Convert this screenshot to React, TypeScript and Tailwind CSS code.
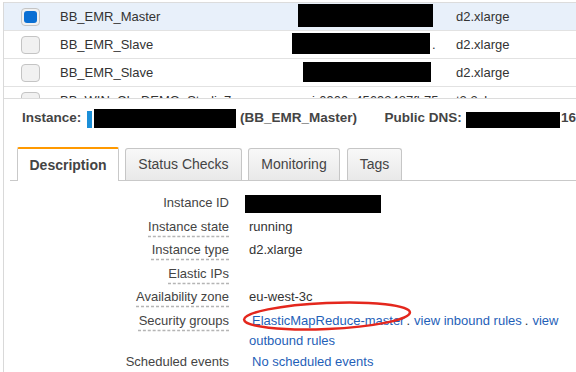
import React from "react";

const rows = [
  { name: "BB_EMR_Master", type: "d2.xlarge", sel: true, box: { l: 298, w: 135, t: 1, h: 23 }, dot: false },
  { name: "BB_EMR_Slave", type: "d2.xlarge", sel: false, box: { l: 292, w: 138, t: 2, h: 21 }, dot: true },
  { name: "BB_EMR_Slave", type: "d2.xlarge", sel: false, box: { l: 303, w: 128, t: 3, h: 20 }, dot: false },
];

function Checkbox({ checked }: { checked: boolean }) {
  return (
    <div className="w-[19px] h-[18px] rounded-[4px] border border-[#c4c4c4] bg-[#f1f1f1] flex items-center justify-center">
      {checked && <div className="w-[13px] h-[12px] rounded-[3px] bg-[#0a6fd3]" />}
    </div>
  );
}

export default function App() {
  return (
    <div className="w-[576px] h-[372px] overflow-hidden bg-white relative font-['Liberation_Sans',Arial,sans-serif] text-[#333]">
      <div className="ml-[3px] h-full border-l border-[#d9d9d9]">
        {/* table */}
        <div className="mt-[2px] h-[97px] border-t border-b border-[#dcdcdc] overflow-hidden text-[13px]">
          {rows.map((r, i) => (
            <div
              key={i}
              className={`relative flex items-center h-[28px] border-b border-[#e2e2e2] ${r.sel ? "bg-[#e8f0fa]" : "bg-white"}`}
            >
              <div className="w-[56px] pl-[17px]">
                <Checkbox checked={r.sel} />
              </div>
              <div className="w-[252px]">{r.name}</div>
              <div className="w-[144px]">
                <div className="relative h-[20px]">
                  {r.dot && <span className="absolute left-[120px] top-0 leading-[20px]">.</span>}
                </div>
              </div>
              <div>{r.type}</div>
              <div
                className="absolute bg-black"
                style={{ left: r.box.l - 4, top: r.box.t, width: r.box.w, height: r.box.h }}
              />
            </div>
          ))}
          <div className="relative flex items-center h-[28px] bg-white">
            <div className="w-[56px] pl-[17px]">
              <Checkbox checked={false} />
            </div>
            <div className="w-[252px]">BB_WIN_CL_DEMO_Studio7</div>
            <div className="w-[144px]">i-0900a45692487fb75</div>
            <div>t2.2xlarge</div>
          </div>
        </div>

        {/* instance line */}
        <div className="mt-[8px] h-[22px] flex items-center text-[13.5px] font-bold text-[#444]">
          <div className="w-[366px] ml-[18px] flex items-center">
            <span className="w-[65px]">Instance:</span>
            <span className="w-[5px] h-[17px] bg-[#1b8fd8] mt-[3px]" />
            <span className="ml-[2px] w-[142px] h-[19px] bg-black" />
            <span className="ml-[4px]">(BB_EMR_Master)</span>
          </div>
          <span className="w-[82px]">Public DNS:</span>
          <span className="w-[95px] h-[16px] bg-black mt-[4px]" />
          <span className="ml-[1px]">16</span>
        </div>

        {/* tabs */}
        <div className="mt-[18px] ml-[6px] h-[34px] flex items-end border-b border-[#c9c9c9] text-[14px]">
          <div className="ml-[7px] -mb-px w-[102px] h-[34px] bg-white border-t-2 border-t-[#ff9900] border-x border-x-[#c9c9c9] rounded-t-[2px] flex items-center justify-center font-bold text-[#444]">
            Description
          </div>
          <div className="ml-[6px] w-[117px] h-[32px] border border-b-0 border-[#c6c6c6] rounded-t-[3px] bg-gradient-to-b from-[#f8f8f8] to-[#e9e9e9] flex items-center justify-center text-[#444]">
            Status Checks
          </div>
          <div className="ml-[6px] w-[92px] h-[32px] border border-b-0 border-[#c6c6c6] rounded-t-[3px] bg-gradient-to-b from-[#f8f8f8] to-[#e9e9e9] flex items-center justify-center text-[#444]">
            Monitoring
          </div>
          <div className="ml-[7px] w-[55px] h-[32px] border border-b-0 border-[#c6c6c6] rounded-t-[3px] bg-gradient-to-b from-[#f8f8f8] to-[#e9e9e9] flex items-center justify-center text-[#444]">
            Tags
          </div>
        </div>

        {/* details */}
        <div className="mt-[12px] text-[13px] leading-[20px]">
          <div className="flex">
            <div className="w-[225px] text-right text-[#444]">Instance ID</div>
            <div className="ml-[20px] w-[320px] flex items-center">
              <div className="-ml-[4px] mt-[1px] w-[136px] h-[18px] bg-black" />
            </div>
          </div>
          <DRow label="Instance state" value="running" />
          <DRow label="Instance type" value="d2.xlarge" />
          <DRow label="Elastic IPs" value="" />
          <DRow label="Availability zone" value="eu-west-3c" />
          <div className="flex mt-[3.5px]">
            <div className="w-[225px] text-right text-[#444]">
              <span className="underline decoration-dashed decoration-[#b5b5b5] underline-offset-[5px]">Security groups</span>
            </div>
            <div className="ml-[20px] w-[322px] text-[#1f5fb8]">
              <span className="ml-[3px]">ElasticMapReduce-master</span>
              <span className="text-[#333] ml-[2px] mr-[4px]">.</span>
              <span>view inbound rules</span>
              <span className="text-[#333] ml-[3px] mr-[4px]">.</span>
              <span>view outbound rules</span>
            </div>
          </div>
          <div className="flex mt-[1.5px]">
            <div className="w-[225px] text-right text-[#444]">Scheduled events</div>
            <div className="ml-[23px] text-[#1f5fb8]">No scheduled events</div>
          </div>
        </div>
      </div>

      {/* red annotation */}
      <svg className="absolute left-[239px] top-[298px]" width="178" height="38" viewBox="0 0 178 38">
        <ellipse cx="88" cy="18" rx="83" ry="13" fill="none" stroke="#e4271d" strokeWidth="2.5" transform="rotate(-2.5 88 18)" />
      </svg>
    </div>
  );
}

function DRow({ label, value }: { label: string; value: string }) {
  return (
    <div className="flex mt-[3.5px]">
      <div className="w-[225px] text-right text-[#444]">
        <span className="underline decoration-dashed decoration-[#b5b5b5] underline-offset-[5px]">{label}</span>
      </div>
      <div className="ml-[20px] text-[#333]">{value || "\u00a0"}</div>
    </div>
  );
}
